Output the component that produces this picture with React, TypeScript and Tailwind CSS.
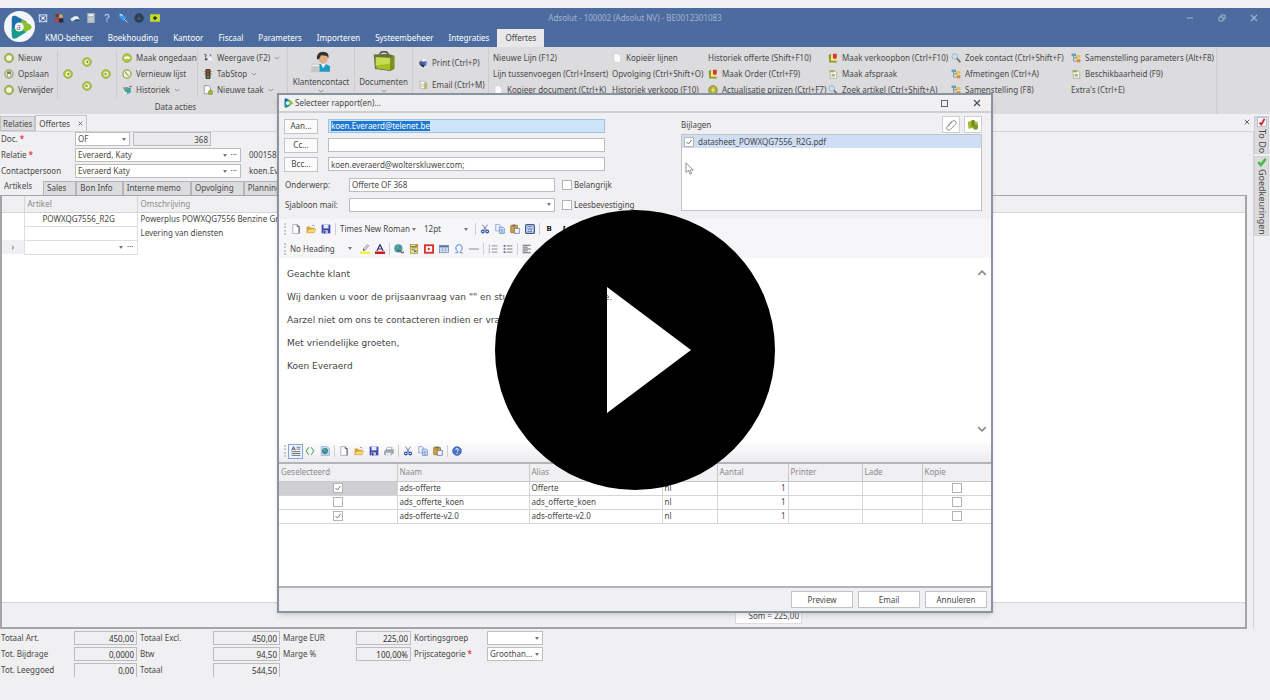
import { ReactNode, useState } from "react";

type IconProps = { name: string; className?: string };

const shapes: Record<string, ReactNode> = {
  window: (
    <>
      <rect x="2" y="3" width="12" height="11" fill="none" stroke="#e8eef8" strokeWidth="1.4" />
      <path d="M2 3l12 11M14 3L2 14" stroke="#e8eef8" strokeWidth="1.2" />
      <rect x="6" y="6" width="4" height="4" fill="#e8eef8" />
    </>
  ),
  people: (
    <>
      <circle cx="5" cy="4" r="3" fill="#8d2f2f" />
      <circle cx="11" cy="5" r="3" fill="#e0a83c" />
      <path d="M1 14V9q4-3 7 0v5z" fill="#b8433c" />
      <path d="M8 15v-5q4-3 7 0v5z" fill="#2d2640" />
    </>
  ),
  car: (
    <>
      <path d="M1 9l6-4h5l3 4v2H1z" fill="#e9eef5" />
      <path d="M8 10h7v3H9z" fill="#3b4a66" />
      <circle cx="4" cy="11" r="2" fill="#d9e0ea" />
    </>
  ),
  calc: (
    <>
      <rect x="2" y="0" width="12" height="16" fill="#a9b2bd" />
      <rect x="4" y="2" width="8" height="3" fill="#edf1f5" />
      <path d="M4 8h8M4 10.5h8M4 13h8" stroke="#e3e8ed" strokeDasharray="2 1" strokeWidth="1.4" />
    </>
  ),
  question: (
    <path d="M5 5q0-3 3-3t3 3q0 2-2 3t-1 3M8 12.500v2" fill="none" stroke="#a9c9f5" strokeWidth="2" />
  ),
  pin: (
    <>
      <path d="M2 1l5 1 7 6-3 1-2 4-7-7z" fill="#3a9cf0" />
      <path d="M10 10l5 5" stroke="#c9e2fa" strokeWidth="1.500" />
      <path d="M3 2l4 2" stroke="#d8edff" strokeWidth="2" />
    </>
  ),
  down: (
    <>
      <circle cx="8" cy="8" r="7.500" fill="#2c3d54" />
      <path d="M8 4v7M5 8l3 3 3-3" fill="none" stroke="#54657c" strokeWidth="1.500" />
    </>
  ),
  plusBox: (
    <>
      <rect x="0" y="2" width="16" height="12" fill="#c3d82c" />
      <path d="M8 5v6M5 8h6" stroke="#1f2d12" strokeWidth="2.200" />
    </>
  ),
  ring: (
    <>
      <circle cx="8" cy="8" r="6" fill="#f3f5e4" stroke="#a9b94a" strokeWidth="3" />
      <circle cx="8" cy="8" r="7.300" fill="none" stroke="#7f8c48" strokeWidth=".8" />
    </>
  ),
  disk: (
    <>
      <circle cx="8" cy="8" r="6.500" fill="#dcded0" stroke="#9aa35b" strokeWidth="2" />
      <rect x="5" y="4" width="6" height="8" fill="#777f5b" />
      <rect x="6" y="8" width="4" height="4" fill="#fff" />
    </>
  ),
  prev: (
    <>
      <circle cx="8" cy="8" r="7" fill="#b5c83a" stroke="#85933f" />
      <circle cx="8" cy="8" r="4" fill="#eef2cd" />
      <path d="M10 5.500v5L6 8z" fill="#7b8a2c" />
    </>
  ),
  next: (
    <>
      <circle cx="8" cy="8" r="7" fill="#b5c83a" stroke="#85933f" />
      <circle cx="8" cy="8" r="4" fill="#eef2cd" />
      <path d="M6 5.500v5L10 8z" fill="#7b8a2c" />
    </>
  ),
  undo: (
    <>
      <circle cx="8" cy="8" r="7" fill="#b5c83a" stroke="#85933f" />
      <path d="M3 9q0-4 5-4t5 4z" fill="#fff" />
    </>
  ),
  clock: (
    <>
      <circle cx="8" cy="8" r="6.500" fill="#f0f2dc" stroke="#98a544" strokeWidth="2" />
      <path d="M5 4l3 5 3 2" fill="none" stroke="#6c7734" strokeWidth="1.500" />
    </>
  ),
  history: (
    <>
      <path d="M1 4l8-1 5 3-9 3z" fill="#8b8e88" />
      <path d="M4 8l10-4v8l-7 3z" fill="#3fa2a4" />
      <path d="M2 12l6-1v3H3z" fill="#eef0ee" />
      <path d="M11 2l4-1v3z" fill="#50555a" />
    </>
  ),
  view: (
    <>
      <path d="M2 2l3 1-1 4M11 2l2 3" stroke="#444b55" strokeWidth="1.500" fill="none" />
      <circle cx="5" cy="10" r="2" fill="#4b5361" />
      <rect x="9" y="7" width="5" height="5" fill="#f7f7f7" />
    </>
  ),
  traffic: (
    <>
      <rect x="4" y="0" width="8" height="16" rx="2" fill="#3c3a32" />
      <circle cx="8" cy="3.500" r="2.200" fill="#d0322b" />
      <circle cx="8" cy="8" r="2" fill="#7a6c27" />
      <circle cx="8" cy="12.500" r="2.200" fill="#4c9e37" />
      <path d="M2 4h2M2 8h2M12 4h2M12 8h2" stroke="#3c3a32" />
    </>
  ),
  task: (
    <>
      <path d="M2 1h7l3 3v10H2z" fill="#fafafa" stroke="#6f7375" />
      <circle cx="12" cy="12" r="3.500" fill="#a9bd33" stroke="#717b35" />
    </>
  ),
  person: (
    <>
      <path d="M9 30v-8q9-7 20 0v8z" fill="#1c9cc4" />
      <path d="M16 19l3 6 4-6z" fill="#f5f5f5" />
      <circle cx="19" cy="11" r="7" fill="#e2ae86" />
      <path d="M10 12Q9 1 19 1q9 0 8 9l-3-3-8-1-3 6z" fill="#33322f" />
      <path d="M2 18h8q4 0 4 3v10H2z" fill="#c3c7ca" />
      <path d="M2 21h11" stroke="#f6f6f6" strokeWidth="2" />
    </>
  ),
  folderBig: (
    <>
      <path d="M10 5q0-4 6-4t6 4" fill="none" stroke="#4a4c40" strokeWidth="2" />
      <path d="M1 5l21-1 9 3v19l-6 3L3 26z" fill="#6c7040" />
      <path d="M4 9l21 1v18L5 25z" fill="#a8bf22" />
      <path d="M4 9l21 1v8L4 21z" fill="#c9db50" />
      <path d="M25 10l6-3v18l-6 3z" fill="#7f9020" />
    </>
  ),
  printer: (
    <>
      <path d="M2 6l5-3 7 3v5l-6 3-6-4z" fill="#54569b" />
      <path d="M5 5l4-4 4 2-3 3z" fill="#f7f8fc" />
      <path d="M4 10l6 2-1 3-5-3z" fill="#1e2550" />
      <circle cx="13" cy="9" r="2" fill="#6cace8" />
    </>
  ),
  mail: (
    <>
      <path d="M3 2h8l3 2v10H4z" fill="#f6f6f2" stroke="#a3a599" />
      <path d="M10 3l4 2v9h-4z" fill="#b0b665" />
      <path d="M4 7h6M4 10h6" stroke="#a7aaa4" />
    </>
  ),
  page: (
    <path d="M3 1h7l4 4v10H3z" fill="#fbfbfb" stroke="#c8c8c8" />
  ),
  order: (
    <>
      <path d="M1 3l4-2v11h9v3H2z" fill="#8e9c26" />
      <path d="M5 3h9v9H5z" fill="#ffe38c" />
      <path d="M8 1h6v7l-3 2-3-2z" fill="#d53c2f" />
    </>
  ),
  note: (
    <>
      <path d="M3 3h9l2 2v10H4z" fill="#f3f4e9" stroke="#9a9c85" />
      <path d="M2 2h8v3H4z" fill="#a2a855" />
      <path d="M6 8h5v4H6z" fill="#a9b578" />
    </>
  ),
  coin: (
    <>
      <circle cx="8" cy="8" r="7" fill="#b0b22a" stroke="#77772a" />
      <path d="M8 4v8M5 8h6" stroke="#f4f3b5" strokeWidth="1.500" />
    </>
  ),
  search: (
    <>
      <path d="M9 8l6 7" stroke="#6d7276" strokeWidth="3" />
      <circle cx="6" cy="5.500" r="4.500" fill="#c4e4f3" stroke="#8499a5" />
    </>
  ),
  tree: (
    <>
      <rect x="1" y="1" width="7" height="4" fill="#5e9dc4" />
      <path d="M4 5v8h5M4 8h5" fill="none" stroke="#777" />
      <rect x="9" y="3" width="6" height="5" fill="#e4bf58" />
      <rect x="9" y="10" width="6" height="5" fill="#d98c42" />
      <rect x="6" y="6" width="3" height="3" fill="#8bb163" />
    </>
  ),
  clip: (
    <path d="M4 10l6-7q2-2 4 0t0 4l-7 7q-2 2-4 0t0-4l6-7" fill="none" stroke="#8b8b8b" strokeWidth="1.300" />
  ),
  attach: (
    <>
      <path d="M1 4l5-2 8 2 1 8-4 2-3-2-6 1z" fill="#a4b92b" />
      <path d="M6 2l4-1v9H6z" fill="#79851f" />
      <path d="M8 8h6v6H9z" fill="#6c9c34" />
    </>
  ),
  newFile: (
    <>
      <path d="M3 1h7l3 3v11H3z" fill="#fff" stroke="#8b8f9c" />
      <path d="M10 1v3h3v11" fill="none" stroke="#3e4250" strokeWidth="1.300" />
    </>
  ),
  open: (
    <>
      <path d="M1 4h5l1 2h6v8H1z" fill="#d9a136" />
      <path d="M4 8h12l-3 6H1z" fill="#fad873" stroke="#a87d24" strokeWidth=".6" />
      <path d="M9 3q3-3 5 1" stroke="#5b7797" fill="none" />
    </>
  ),
  save: (
    <>
      <path d="M1 1h14v14H1z" fill="#3e49b5" />
      <rect x="4" y="1" width="8" height="6" fill="#e8ecfa" />
      <rect x="4" y="10" width="7" height="5" fill="#c6cde8" />
      <rect x="5" y="11" width="2" height="4" fill="#232a6c" />
    </>
  ),
  print: (
    <>
      <path d="M5 2h8l-2 6H3z" fill="#fff" stroke="#8b93a4" />
      <path d="M1 8l3-2h11v5l-3 3H1z" fill="#a4aab8" stroke="#666d7c" strokeWidth=".7" />
      <path d="M3 11h8v3H3z" fill="#f4f6fa" />
    </>
  ),
  cut: (
    <>
      <path d="M4 1l6 9M12 1L6 10" stroke="#6279a8" strokeWidth="1.500" />
      <circle cx="4.500" cy="12" r="2.200" fill="none" stroke="#2b50b0" strokeWidth="1.800" />
      <circle cx="11.500" cy="12" r="2.200" fill="none" stroke="#2b50b0" strokeWidth="1.800" />
    </>
  ),
  copy: (
    <>
      <path d="M1 1h6l2 2v8H1z" fill="#e6effc" stroke="#6f88bb" />
      <path d="M7 5h6l2 2v8H7z" fill="#d1e2fa" stroke="#5274b5" />
      <path d="M9 9h4M9 11h4M9 13h4" stroke="#5e80c1" />
    </>
  ),
  paste: (
    <>
      <rect x="1" y="2" width="11" height="12" rx="1" fill="#d19d3d" stroke="#8a6724" />
      <rect x="4" y="1" width="5" height="3" fill="#6e6c66" />
      <path d="M7 7h8v8H7z" fill="#edf2fb" stroke="#4a5f90" />
    </>
  ),
  word: (
    <>
      <rect x="1" y="1" width="14" height="14" rx="2" fill="#d5e0f2" stroke="#37578f" strokeWidth="2" />
      <path d="M4 4h8M4 12h8" stroke="#37578f" />
      <path d="M4 6l2 4 2-4 2 4 2-4" stroke="#37578f" fill="none" />
    </>
  ),
  marker: (
    <>
      <path d="M5 8l7-7 2 2-6 7z" fill="#dbe0eb" stroke="#606a80" />
      <path d="M5 8l3 2-3 1z" fill="#394563" />
      <rect x="0" y="12" width="16" height="4" fill="#f7f13e" />
    </>
  ),
  fontColor: (
    <>
      <path d="M3 11L8 1l5 10M5 8h6" fill="none" stroke="#283572" strokeWidth="1.800" />
      <rect x="0" y="12" width="16" height="4" fill="#d5161c" />
    </>
  ),
  globe: (
    <>
      <circle cx="7" cy="7" r="6.500" fill="#4a93ad" />
      <path d="M2 4q4-4 6 0l-2 4zM8 9l4-3v5z" fill="#5caf62" />
      <path d="M6 12q3-4 5 0t5 0" fill="none" stroke="#5a5d63" strokeWidth="2" />
    </>
  ),
  image: (
    <>
      <rect x="2" y="1" width="12" height="14" fill="#efdf78" stroke="#8d8451" />
      <path d="M2 4h12M4 6h8M4 9h5" stroke="#6e8a42" strokeWidth="1.400" />
      <path d="M8 10h4v3H8z" fill="#5177bd" />
      <circle cx="12" cy="3" r="2" fill="#d77a33" />
    </>
  ),
  video: (
    <>
      <rect x="1.500" y="2" width="13" height="12" fill="#fff" stroke="#d9352e" strokeWidth="3" />
      <path d="M6 5.500l5 2.500-5 2.500z" fill="#d9352e" />
    </>
  ),
  grid: (
    <>
      <rect x="1" y="2" width="14" height="12" fill="#f7fbff" stroke="#4d6fa5" />
      <path d="M1 4h14" stroke="#4d6fa5" strokeWidth="3" />
      <path d="M1 8h14M1 11h14M6 2v12M10.500 2v12" stroke="#7b97c2" />
    </>
  ),
  omega: (
    <path d="M2 14h4v-2Q2 9 3 5t5-4 5 4-3 7v2h4" fill="none" stroke="#4e8ad8" strokeWidth="1.600" />
  ),
  rule: <path d="M0 8h16" stroke="#8f8f8f" strokeWidth="1.600" />,
  ol: (
    <>
      <path d="M6 3h9M6 8h9M6 13h9" stroke="#8c8c8c" strokeWidth="1.500" />
      <path d="M2 1v4M2 6v4M2 11v4" stroke="#7a7a7a" />
    </>
  ),
  ul: (
    <>
      <path d="M6 3h9M6 8h9M6 13h9" stroke="#777" strokeWidth="1.500" />
      <path d="M1 3h3M1 8h3M1 13h3" stroke="#5068ac" strokeWidth="2.500" />
    </>
  ),
  left: <path d="M1 2h13M1 5h8M1 8h13M1 11h8M1 14h13" stroke="#5b5f6b" strokeWidth="1.500" />,
  design: (
    <>
      <path d="M1 7l3-6 3 6M2 5h4" fill="none" stroke="#444" strokeWidth="1.300" />
      <path d="M9 2h6M9 5h6M1 9h14M1 12h14M1 15h14" stroke="#5a5a5a" strokeWidth="1.300" />
    </>
  ),
  code: <path d="M6 2L2 8l4 6M10 2l4 6-4 6" fill="none" stroke="#69b86a" strokeWidth="2" />,
  preview: (
    <>
      <path d="M2 1h9l4 3v11H2z" fill="#cfe0f5" stroke="#6f9fc7" />
      <circle cx="8" cy="8" r="5" fill="#3d86a8" />
      <path d="M5 5q4-2 4 2L7 10zM9 10l3-2v3z" fill="#65b369" />
    </>
  ),
  help: (
    <>
      <circle cx="8" cy="8" r="7" fill="#4b77cf" stroke="#2d4f9f" />
      <path d="M6 6q0-2 2-2t2 2-2 3M8 11v2" fill="none" stroke="#fff" strokeWidth="1.500" />
    </>
  ),
  todo: (
    <>
      <rect x="1" y="1" width="14" height="14" fill="#f5f5fa" stroke="#a5a7c9" />
      <path d="M4 9l3 3 5-9" fill="none" stroke="#c8262c" strokeWidth="3" />
    </>
  ),
  approve: <path d="M2 8l4 5 8-10" fill="none" stroke="#4ab84a" strokeWidth="4" />,
};

const Icon = ({ name, className = "size-[10px]" }: IconProps) => (
  <svg viewBox={name === "person" || name === "folderBig" ? "0 0 32 32" : "0 0 16 16"} className={"shrink-0 " + className} aria-hidden="true">
    {shapes[name]}
  </svg>
);

const Logo = ({ className }: { className: string }) => (
  <svg viewBox="0 0 32 32" className={"shrink-0 " + className} aria-hidden="true">
    <path d="M5 5q0-5 5-4l15 8-8 6-12 8z" fill="#1e6fb0" />
    <path d="M18 6l12 7q3 3 0 6l-9 5-5-7z" fill="#8cc02c" />
    <path d="M5 18l9-2 10 7-13 8q-6 2-6-4z" fill="#1a9a8c" />
    <circle cx="15" cy="16" r="6" fill="#f4f6fa" />
  </svg>
);

const Chevron = ({ className = "size-[6px]" }: { className?: string }) => (
  <svg viewBox="0 0 8 8" className={"shrink-0 " + className} aria-hidden="true">
    <path d="M1 2.500l3 3 3-3" fill="none" stroke="#888" strokeWidth="1.200" />
  </svg>
);

const Cross = ({ className = "size-[6px]" }: { className?: string }) => (
  <svg viewBox="0 0 8 8" className={"shrink-0 " + className} aria-hidden="true">
    <path d="M1 1l6 6M7 1L1 7" stroke="currentColor" strokeWidth="1.100" />
  </svg>
);

type SelectProps = { id?: string; label?: string; options: string[]; className: string; dots?: boolean };

const Select = ({ id, label, options, className, dots }: SelectProps) => (
  <div className={"grid items-center " + className}>
    <select id={id} aria-label={label} className="col-start-1 row-start-1 h-full w-full appearance-none bg-transparent px-[2px] outline-none">
      {options.map((option) => (
        <option key={option}>{option}</option>
      ))}
    </select>
    <span className="pointer-events-none col-start-1 row-start-1 flex items-center gap-[4px] justify-self-end pr-[3px]">
      <svg viewBox="0 0 4 3" className="h-[3px] w-[4px]" aria-hidden="true">
        <path d="M0 0h4L2 3z" fill="#777" />
      </svg>
      {dots && <span className="leading-[8px]">···</span>}
    </span>
  </div>
);

type CheckProps = { label?: string; hiddenLabel?: string; checked?: boolean; className?: string };

const Check = ({ label, hiddenLabel, checked = false, className = "" }: CheckProps) => {
  const [on, setOn] = useState(checked);

  return (
    <label className={"flex items-center " + className}>
      <span className="grid">
        <input
          type="checkbox"
          aria-label={hiddenLabel}
          checked={on}
          onChange={() => setOn(!on)}
          className="col-start-1 row-start-1 size-[10px] appearance-none border border-[#b4b4b6] bg-white"
        />
        {on && (
          <svg viewBox="0 0 10 10" className="pointer-events-none col-start-1 row-start-1 size-[10px]" aria-hidden="true">
            <path d="M2.500 5l2 2 3-4" fill="none" stroke="#777" />
          </svg>
        )}
      </span>
      {label}
    </label>
  );
};

const quickIcons = ["window", "people", "car", "calc", "question", "pin", "down", "plusBox"];
const menu = ["KMO-beheer", "Boekhouding", "Kantoor", "Fiscaal", "Parameters", "Importeren", "Systeembeheer", "Integraties"];

const Header = () => (
  <header className="relative flex h-[39px] flex-col bg-[#4c6c9f] text-white">
    <div className="absolute top-[3px] left-[4px] z-10 grid size-[31px] place-items-center rounded-full bg-[#f4f6fa]">
      <Logo className="col-start-1 row-start-1 size-[24px]" />
      <span className="col-start-1 row-start-1 pr-[2px] text-[#777]">a</span>
    </div>
    <div className="grid h-[20px] grid-cols-[1fr_auto_1fr] items-center">
      <div className="flex gap-[6px] pl-[38px]">
        {quickIcons.map((name) => (
          <button key={name} type="button" aria-label={name}>
            <Icon name={name} />
          </button>
        ))}
      </div>
      <h1 className="text-[#a3b4d2]">Adsolut - 100002 (Adsolut NV) - BE0012301083</h1>
      <div className="flex items-center justify-end gap-[24px] pr-[12px] text-[#a3b4d2]">
        <button type="button" aria-label="Minimaliseren">
          <svg viewBox="0 0 8 8" className="size-[8px]"><path d="M1 4h6" stroke="currentColor" /></svg>
        </button>
        <button type="button" aria-label="Herstellen">
          <svg viewBox="0 0 8 8" className="size-[8px]"><path d="M1 3h4v4H1zM3 3V1h4v4H5" fill="none" stroke="currentColor" /></svg>
        </button>
        <button type="button" aria-label="Sluiten"><Cross className="size-[8px]" /></button>
      </div>
    </div>
    <nav className="flex h-[19px] items-end gap-px pl-[38px]">
      {menu.map((item) => (
        <a key={item} href="#" className="flex h-[18px] items-center px-[7px]">{item}</a>
      ))}
      <a href="#" className="flex h-[18px] items-center bg-[#e8e8ea] px-[8px] text-[#444]">Offertes</a>
    </nav>
  </header>
);

const Action = ({ icon, text, menu }: { icon?: string; text: string; menu?: boolean }) => (
  <button type="button" className="flex h-[16px] items-center gap-[4px] whitespace-nowrap">
    {icon && <Icon name={icon} />}
    {text}
    {menu && <Chevron />}
  </button>
);

const commandColumns = [
  { width: "w-[119px]", items: [["", "Nieuwe Lijn (F12)"], ["", "Lijn tussenvoegen (Ctrl+Insert)"], ["page", "Kopieer document (Ctrl+K)"]] },
  { width: "w-[96px]", items: [["page", "Kopieër lijnen"], ["", "Opvolging (Ctrl+Shift+O)"], ["", "Historiek verkoop (F10)"]] },
  { width: "w-[120px]", items: [["", "Historiek offerte (Shift+F10)"], ["order", "Maak Order (Ctrl+F9)"], ["coin", "Actualisatie prijzen (Ctrl+F7)"]] },
  { width: "w-[123px]", items: [["order", "Maak verkoopbon (Ctrl+F10)"], ["note", "Maak afspraak"], ["search", "Zoek artikel (Ctrl+Shift+A)"]] },
  { width: "w-[120px]", items: [["search", "Zoek contact (Ctrl+Shift+F)"], ["tree", "Afmetingen (Ctrl+A)"], ["tree", "Samenstelling (F8)"]] },
  { width: "w-[145px]", items: [["tree", "Samenstelling parameters (Alt+F8)"], ["note", "Beschikbaarheid (F9)"], ["", "Extra's (Ctrl+E)"]] },
];

const Ribbon = () => (
  <section className="flex h-[67px] overflow-hidden bg-[#dcdcde] text-[#484848]">
    <div className="flex w-[288px] shrink-0 flex-col border-r border-[#cdcdcf]">
      <div className="flex h-[52px] pt-[3px]">
        <div className="w-[58px] border-r border-[#cdcdcf] pl-[4px]">
          <Action icon="ring" text="Nieuw" />
          <Action icon="disk" text="Opslaan" />
          <Action icon="ring" text="Verwijder" />
        </div>
        <div className="grid w-[59px] grid-cols-3 place-items-center border-r border-[#cdcdcf]">
          <button type="button" aria-label="Eerste" className="row-span-2"><Icon name="prev" /></button>
          <button type="button" aria-label="Vorige"><Icon name="prev" /></button>
          <button type="button" aria-label="Laatste" className="row-span-2"><Icon name="next" /></button>
          <button type="button" aria-label="Volgende"><Icon name="next" /></button>
        </div>
        <div className="w-[81px] border-r border-[#cdcdcf] pl-[5px]">
          <Action icon="undo" text="Maak ongedaan" />
          <Action icon="clock" text="Vernieuw lijst" />
          <Action icon="history" text="Historiek" menu />
        </div>
        <div className="pl-[5px]">
          <Action icon="view" text="Weergave (F2)" menu />
          <Action icon="traffic" text="TabStop" menu />
          <Action icon="task" text="Nieuwe taak" menu />
        </div>
      </div>
      <p className="pl-[64px] text-center leading-[18px]">Data acties</p>
    </div>
    <button type="button" className="flex w-[67px] shrink-0 flex-col items-center border-r border-[#cdcdcf] pt-[4px]">
      <Icon name="person" className="size-[22px]" />
      <span className="pt-[3px]">Klantencontact</span>
      <Chevron />
    </button>
    <button type="button" className="flex w-[58px] shrink-0 flex-col items-center border-r border-[#cdcdcf] pt-[4px]">
      <Icon name="folderBig" className="size-[22px]" />
      <span className="pt-[3px]">Documenten</span>
      <Chevron />
    </button>
    <div className="flex w-[76px] shrink-0 flex-col gap-[6px] border-r border-[#cdcdcf] pt-[8px] pl-[5px]">
      <Action icon="printer" text="Print (Ctrl+P)" />
      <Action icon="mail" text="Email (Ctrl+M)" />
    </div>
    <div className="flex border-r border-[#cdcdcf] pt-[3px] pl-[4px]">
      {commandColumns.map((column) => (
        <div key={column.width + column.items[0][1]} className={"shrink-0 " + column.width}>
          {column.items.map(([icon, text]) => (
            <Action key={text} icon={icon} text={text} />
          ))}
        </div>
      ))}
    </div>
  </section>
);

const field = "h-[14px] border border-[#bdbdbf] px-[2px] outline-none";
const detailTabs = ["Sales", "Bon Info", "Interne memo", "Opvolging", "Planning"];

const DocumentForm = () => (
  <form className="flex flex-col gap-[2px] pb-[2px]">
    <div className="flex items-center">
      <label htmlFor="doc" className="w-[75px] pl-px">Doc. <span className="text-red-600">*</span></label>
      <Select id="doc" options={["OF"]} className="h-[14px] w-[55px] border border-[#bdbdbf] bg-white" />
      <input aria-label="Nummer" readOnly value="368" className={"ml-[3px] w-[78px] bg-[#eaeaec] text-right " + field} />
    </div>
    <div className="flex items-center">
      <label htmlFor="relation" className="w-[75px] pl-px">Relatie <span className="text-red-600">*</span></label>
      <Select id="relation" options={["Everaerd, Katy"]} dots className="h-[14px] w-[166px] border border-[#bdbdbf] bg-white" />
      <span className="pl-[8px]">000158</span>
    </div>
    <div className="flex items-center">
      <label htmlFor="contact" className="w-[75px] pl-px">Contactpersoon</label>
      <Select id="contact" options={["Everaerd Katy"]} dots className="h-[14px] w-[166px] border border-[#bdbdbf] bg-white" />
      <span className="pl-[8px]">koen.Ev</span>
    </div>
  </form>
);

const Articles = () => (
  <div className="flex grow flex-col border-2 border-t border-[#a5a5a7] bg-white">
    <table className="w-full table-fixed border-collapse text-left">
      <thead className="bg-[#f0eff1] text-[#8a8a8a]">
        <tr className="h-[16px]">
          <th className="w-[22px] border-r border-b border-[#d5d5d7]"></th>
          <th className="w-[113px] border-r border-b border-[#d5d5d7] px-[3px] font-normal">Artikel</th>
          <th className="border-b border-[#d5d5d7] px-[3px] font-normal">Omschrijving</th>
        </tr>
      </thead>
      <tbody>
        <tr className="h-[14px]">
          <td></td>
          <td className="border border-[#dededf] pl-[18px]">POWXQG7556_R2G</td>
          <td className="px-[3px]">Powerplus POWXQG7556 Benzine Gra</td>
        </tr>
        <tr className="h-[14px]">
          <td></td>
          <td className="border border-[#dededf]"></td>
          <td className="px-[3px]">Levering van diensten</td>
        </tr>
        <tr className="h-[14px]">
          <td className="bg-[#f0eff1] text-center">›</td>
          <td className="border border-[#dededf]">
            <Select label="Artikel" options={[""]} dots className="h-[12px]" />
          </td>
          <td></td>
        </tr>
      </tbody>
    </table>
    <div className="mt-auto flex h-[25px] justify-end border-t border-[#d5d5d7] bg-[#f0eff1] pr-[443px]">
      <output className="mt-[2px] h-[19px] w-[67px] border border-[#dcdcde] bg-white pr-[2px] text-right leading-[19px]">Som = 225,00</output>
    </div>
  </div>
);

const totals = [
  [["Totaal Art.", "450,00"], ["Totaal Excl.", "450,00"], ["Marge EUR", "225,00"]],
  [["Tot. Bijdrage", "0,0000"], ["Btw", "94,50"], ["Marge %", "100,00%"]],
  [["Tot. Leeggoed", "0,00"], ["Totaal", "544,50"]],
];

const Totals = () => (
  <form className="grid grid-cols-[74px_63px_76px_67px_76px_55px_76px_56px] items-center gap-y-[2px] pt-[2px] pb-[23px]">
    {totals.map((row, index) => (
      <div key={index} className="contents">
        {row.map(([label, value], column) => (
          <div key={label} className="contents">
            <label htmlFor={label} className={column === 0 ? "pl-px" : "pl-[3px]"}>{label}</label>
            <input id={label} readOnly value={value} className={"w-full bg-transparent text-right text-[#333] " + field + (index === 2 ? " border-b-0" : "")} />
          </div>
        ))}
        {index === 0 && (
          <>
            <label htmlFor="discount" className="pl-[3px]">Kortingsgroep</label>
            <Select id="discount" options={[""]} className="h-[14px] border border-[#bdbdbf] bg-white" />
          </>
        )}
        {index === 1 && (
          <>
            <label htmlFor="price" className="pl-[3px]">Prijscategorie <span className="text-red-600">*</span></label>
            <Select id="price" options={["Groothan..."]} className="h-[14px] border border-[#bdbdbf] bg-white" />
          </>
        )}
      </div>
    ))}
  </form>
);

const Divider = () => <span className="-mx-px h-[12px] w-px shrink-0 bg-[#cfcfd3]" />;
const Grip = () => <span className="h-[12px] border-l-2 border-dotted border-[#c9c9cd]" />;

const Tools = ({ names }: { names: string[] }) => (
  <>
    {names.map((name) => (
      <button key={name} type="button" aria-label={name}><Icon name={name} /></button>
    ))}
  </>
);

const reports = [
  { name: "ads-offerte", alias: "Offerte", selected: true },
  { name: "ads_offerte_koen", alias: "ads_offerte_koen", selected: false },
  { name: "ads-offerte-v2.0", alias: "ads-offerte-v2.0", selected: true },
];

const reportColumns = [
  ["Geselecteerd", "w-[118px]"],
  ["Naam", "w-[132px]"],
  ["Alias", "w-[133px]"],
  ["Taal", "w-[55px]"],
  ["Aantal", "w-[71px]"],
  ["Printer", "w-[74px]"],
  ["Lade", "w-[60px]"],
  ["Kopie", ""],
];

const recipients = [
  { button: "Aan...", value: "koen.Everaerd@telenet.be" },
  { button: "Cc...", value: "" },
  { button: "Bcc...", value: "koen.everaerd@wolterskluwer.com;" },
];

const MailForm = () => (
  <div className="flex justify-between pt-[2px] pr-[9px] pl-[5px]">
    <div className="flex w-[370px] flex-col gap-[5px] pt-[4px]">
      {recipients.map(({ button, value }, index) => (
        <div key={button} className="flex h-[14px] items-center gap-[10px] pr-[49px]">
          <button type="button" className="h-[15px] w-[34px] shrink-0 border border-[#c3c3c5] bg-[#fbfbfb]">{button}</button>
          {index === 0 ? (
            <div className="flex h-[14px] grow items-center border border-[#9fc3df] bg-[#cde5f8] px-[2px]">
              <span contentEditable suppressContentEditableWarning role="textbox" aria-label="Aan" className="bg-[#1f78d0] leading-[10px] text-white outline-none">{value}</span>
            </div>
          ) : (
            <input aria-label={button} defaultValue={value} className={"min-w-0 grow bg-white " + field} />
          )}
        </div>
      ))}
      <div className="flex h-[15px] items-center pt-[2px]">
        <label htmlFor="subject" className="w-[65px] pl-px">Onderwerp:</label>
        <input id="subject" defaultValue="Offerte OF 368" className={"w-[206px] bg-white " + field} />
        <Check label="Belangrijk" className="gap-[2px] pl-[7px]" />
      </div>
      <div className="flex h-[15px] items-center pt-[2px]">
        <label htmlFor="template" className="w-[65px] pl-px">Sjabloon mail:</label>
        <Select id="template" options={[""]} className="h-[14px] w-[206px] border border-[#bdbdbf] bg-white" />
        <Check label="Leesbevestiging" className="gap-[2px] pl-[7px]" />
      </div>
    </div>
    <div className="w-[301px] shrink-0">
      <div className="flex h-[19px] items-center gap-[4px]">
        <span className="grow">Bijlagen</span>
        <button type="button" aria-label="Bestand toevoegen" className="grid h-[17px] w-[18px] place-items-center border border-[#cfcfd1] bg-white"><Icon name="clip" className="size-[12px]" /></button>
        <button type="button" aria-label="Document toevoegen" className="grid h-[17px] w-[18px] place-items-center border border-[#cfcfd1] bg-white"><Icon name="attach" className="size-[12px]" /></button>
      </div>
      <div className="h-[77px] border border-[#c3c3c5] bg-white">
        <Check label="datasheet_POWXQG7556_R2G.pdf" checked className="h-[13px] gap-[4px] bg-[#cfddf5] pl-[2px]" />
        <svg viewBox="0 0 12 16" className="mt-[14px] ml-[3px] h-[13px] w-[10px]" aria-hidden="true">
          <path d="M1 1v12l3-3 2 5 2-1-2-4h4z" fill="#fff" stroke="#777" />
        </svg>
      </div>
    </div>
  </div>
);

const Editor = () => (
  <div className="mt-[8px] flex flex-col">
    <div className="flex h-[20px] items-center gap-[5px] bg-[#f6f6f9] pl-[5px]">
      <Grip />
      <Tools names={["newFile", "open", "save"]} />
      <Divider />
      <Select label="Lettertype" options={["Times New Roman"]} className="-ml-[2px] h-[14px] w-[81px]" />
      <Select label="Grootte" options={["12pt"]} className="-ml-[2px] h-[14px] w-[49px]" />
      <Divider />
      <Tools names={["cut", "copy", "paste", "word"]} />
      <Divider />
      <button type="button" className="w-[10px] font-serif font-bold text-black">B</button>
      <button type="button" className="w-[10px] font-serif font-bold text-black italic">I</button>
    </div>
    <div className="flex h-[19px] items-center gap-[5px] bg-[#f6f6f9] pl-[5px]">
      <Grip />
      <Select label="Opmaak" options={["No Heading"]} className="-ml-[3px] h-[14px] w-[67px]" />
      <Tools names={["marker", "fontColor"]} />
      <Divider />
      <Tools names={["globe", "image", "video", "grid", "omega", "rule"]} />
      <Divider />
      <Tools names={["ol", "ul"]} />
      <Divider />
      <Tools names={["left"]} />
    </div>
    <div className="flex h-[182px] justify-between bg-white pt-[10px] pr-[4px] pl-[8px]">
      <div className="flex flex-col gap-[11px] font-['DejaVu_Sans',sans-serif] text-[9px] text-[#444]">
        <p>Geachte klant</p>
        <p>Wij danken u voor de prijsaanvraag van "" en sturen u hierbij de bijlage.</p>
        <p>Aarzel niet om ons te contacteren indien er vragen zijn.</p>
        <p>Met vriendelijke groeten,</p>
        <p>Koen Everaerd</p>
      </div>
      <div className="flex flex-col justify-between pb-[6px]">
        <Chevron className="size-[10px] rotate-180" />
        <Chevron className="size-[10px]" />
      </div>
    </div>
    <div className="flex h-[22px] items-center gap-[5px] bg-linear-to-b from-white to-[#ececf0] pl-[5px]">
      <Grip />
      <button type="button" aria-label="Ontwerp" className="-mx-[3px] grid size-[15px] place-items-center border border-[#86a5dc] bg-[#eef3fc]"><Icon name="design" /></button>
      <Tools names={["code", "preview"]} />
      <Divider />
      <Tools names={["newFile", "open", "save", "print"]} />
      <Divider />
      <Tools names={["cut", "copy", "paste"]} />
      <Divider />
      <Tools names={["help"]} />
    </div>
  </div>
);

const ReportDialog = () => (
  <div role="dialog" aria-labelledby="dialog-title" className="absolute top-[93px] left-1/2 flex w-[716px] -translate-x-1/2 flex-col border-2 border-[#8b93a3] bg-[#f0eff1] shadow-md">
    <header className="flex h-[18px] items-center border-b-2 border-[#cfcfd1] px-[4px]">
      <Logo className="size-[10px]" />
      <h2 id="dialog-title" className="grow pl-[2px]">Selecteer rapport(en)...</h2>
      <button type="button" aria-label="Maximaliseren" className="mr-[25px] size-[7px] border border-[#666]"></button>
      <button type="button" aria-label="Sluiten" className="mr-[6px]"><Cross className="size-[8px]" /></button>
    </header>
    <MailForm />
    <Editor />
    <div className="h-[126px] border-y-2 border-[#b4b4b6] bg-white">
      <table className="w-full table-fixed border-collapse text-left">
        <thead className="bg-[#f0eff1] text-[#8a8a8a]">
          <tr className="h-[17px]">
            {reportColumns.map(([title, width]) => (
              <th key={title} className={"border-r border-b border-[#c9c9cb] px-[2px] font-normal last:border-r-0 " + width}>{title}</th>
            ))}
          </tr>
        </thead>
        <tbody>
          {reports.map(({ name, alias, selected }, index) => (
            <tr key={name} className="h-[14px] *:border-r *:border-b *:border-[#d5d5d7] *:px-[2px] *:last:border-r-0">
              <td className={index === 0 ? "bg-[#cfcfd1]" : ""}>
                <Check hiddenLabel={name} checked={selected} className="justify-center" />
              </td>
              <td>{name}</td>
              <td>{alias}</td>
              <td>nl</td>
              <td className="text-right">1</td>
              <td></td>
              <td></td>
              <td><Check hiddenLabel={"Kopie " + name} className="justify-center" /></td>
            </tr>
          ))}
        </tbody>
      </table>
    </div>
    <footer className="flex h-[23px] items-center justify-end gap-[5px] pr-[4px]">
      {["Preview", "Email", "Annuleren"].map((text) => (
        <button key={text} type="button" className="h-[17px] w-[62px] border border-[#c3c3c5] bg-white">{text}</button>
      ))}
    </footer>
  </div>
);

// the triangle is cut out of the disc, so the editor shows through it
const PlayButton = () => (
  <button type="button" aria-label="Afspelen" className="absolute top-1/2 left-1/2 size-[280px] -translate-1/2 rounded-full">
    <svg viewBox="0 0 280 280" aria-hidden="true">
      <path fillRule="evenodd" d="M0 140a140 140 0 1 0 280 0a140 140 0 1 0-280 0zM112 77l84 63-84 63z" fill="#000" />
    </svg>
  </button>
);

const App = () => (
  <main className="relative flex min-h-screen flex-col overflow-hidden bg-[#f0eff1] pt-2 font-['Noto_Sans',sans-serif] text-[8px] leading-[12px] text-[#484848]">
    <Header />
    <Ribbon />
    <div className="flex grow">
      <div className="flex grow flex-col">
        <div className="flex h-[18px] items-end border-b border-[#d5d5d7]">
          <a href="#" className="flex h-[15px] items-center border border-[#c3c3c5] bg-[#dcdcde] px-[2px]">Relaties</a>
          <a href="#" className="flex h-[16px] items-center gap-[8px] border border-b-0 border-[#c3c3c5] px-[3px]">Offertes <Cross className="size-[5px]" /></a>
          <button type="button" aria-label="Tab sluiten" className="mr-[4px] mb-[6px] ml-auto"><Cross /></button>
        </div>
        <div className="flex grow flex-col border-r border-[#d5d5d7] pr-[6px]">
          <DocumentForm />
          <nav className="flex h-[15px] items-end">
            <a href="#" className="h-[15px] px-[4px] pr-[11px]">Artikels</a>
            {detailTabs.map((tab) => (
              <a key={tab} href="#" className="h-[14px] border border-b-0 border-[#b4b4b6] bg-[#dcdcde] px-[3px] pr-[9px]">{tab}</a>
            ))}
          </nav>
          <Articles />
        </div>
      </div>
      <aside className="flex w-[16px] flex-col gap-[2px] pt-[2px] pr-px text-[9px]">
        <button type="button" className="flex items-center gap-[2px] border border-[#d0d0d2] bg-[#dcdcde] py-[4px] [writing-mode:vertical-rl]"><Icon name="todo" /> To Do</button>
        <button type="button" className="flex items-center gap-[2px] border border-[#d0d0d2] bg-[#dcdcde] py-[3px] [writing-mode:vertical-rl]"><Icon name="approve" /> Goedkeuringen</button>
      </aside>
    </div>
    <Totals />
    <ReportDialog />
    <PlayButton />
  </main>
);

export default App;
